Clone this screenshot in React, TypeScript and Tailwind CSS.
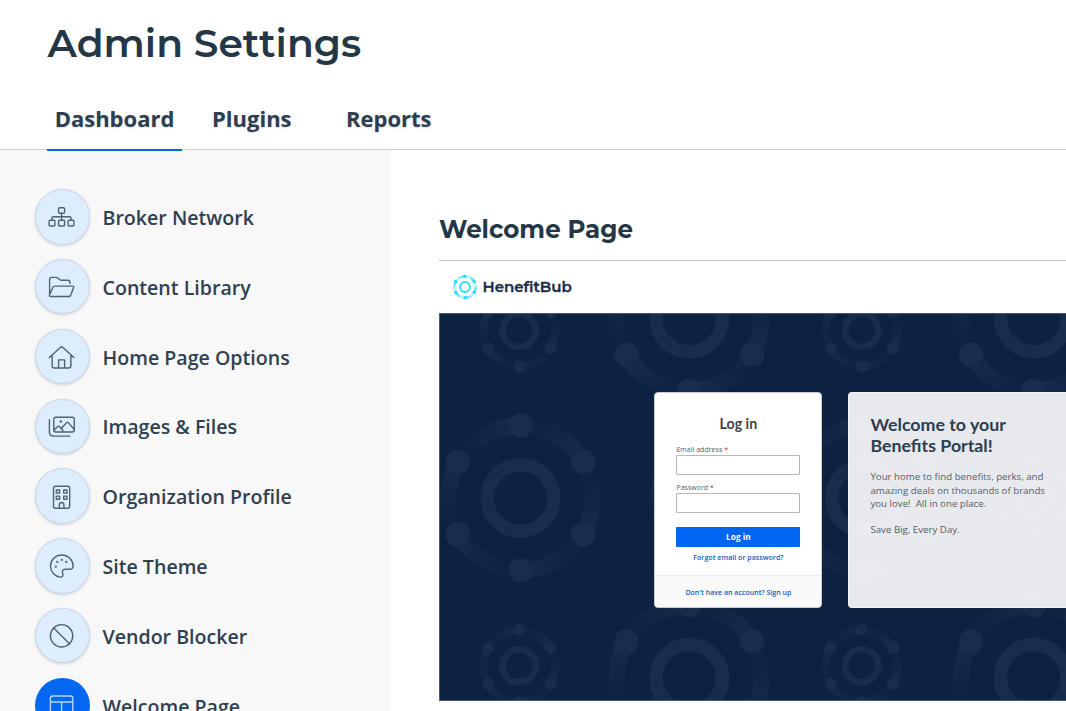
import type { ReactNode } from "react";

const ARC = "M0 -72.3A72.3 72.3 0 0 1 62.6 -36.15";
const ANGLES = [0, 60, 120, 180, 240, 300];

function Hub({ x, y, s = 1, grad, color }: { x: number; y: number; s?: number; grad: string; color: string }) {
  return (
    <g transform={`translate(${x} ${y}) scale(${s})`}>
      {ANGLES.map((a) => (
        <g key={a} transform={`rotate(${a})`}>
          <path d={ARC} fill="none" stroke={`url(#${grad})`} strokeWidth="16.5" />
        </g>
      ))}
      {ANGLES.map((a) => (
        <circle key={a} cy="-72.5" r="12.3" fill={color} transform={`rotate(${a})`} />
      ))}
      <circle r="33.3" fill="none" stroke={color} strokeWidth="13.5" />
    </g>
  );
}

function Pattern() {
  const big = [[250.3, 5.5], [594.7, 5.5], [81.5, 185], [426, 185], [250.3, 364.7], [594.7, 364.7]];
  const small = [[80.3, 17.3], [422.7, 17.3], [250.3, 185], [594.7, 185], [80.3, 352.8], [422.7, 352.8]];
  return (
    <svg className="absolute -top-px -left-px" width="627" height="388" viewBox="0 0 627 388">
      <defs>
        <linearGradient id="arc" gradientUnits="userSpaceOnUse" x1="8" y1="-76" x2="60" y2="-46">
          <stop offset="0" stopColor="#182c4b" stopOpacity="0.05" />
          <stop offset="1" stopColor="#182c4b" stopOpacity="0.7" />
        </linearGradient>
      </defs>
      {big.map(([x, y]) => <Hub key={`${x}-${y}`} x={x} y={y} grad="arc" color="#182c4b" />)}
      {small.map(([x, y]) => <Hub key={`${x}-${y}`} x={x} y={y} s={0.497} grad="arc" color="#182c4b" />)}
    </svg>
  );
}

function Logo() {
  return (
    <svg width="26" height="26" viewBox="-13 -13 26 26">
      <defs>
        <linearGradient id="logoArc" gradientUnits="userSpaceOnUse" x1="8" y1="-76" x2="60" y2="-46">
          <stop offset="0" stopColor="#2fdcff" stopOpacity="0.1" />
          <stop offset="1" stopColor="#2fdcff" stopOpacity="0.9" />
        </linearGradient>
      </defs>
      <Hub x={0} y={0} s={0.147} grad="logoArc" color="#2fdcff" />
    </svg>
  );
}

const icons: Record<string, ReactNode> = {
  network: (
    <>
      <rect x="10.6" y="4.7" width="6" height="5.6" rx="1" />
      <rect x="1.1" y="17.2" width="5.8" height="5.8" rx="1" />
      <rect x="10.6" y="17.2" width="6" height="5.8" rx="1" />
      <rect x="20.1" y="17.2" width="5.8" height="5.8" rx="1" />
      <path d="M13.6 10.3v6.9M4 17.2v-2.2q0-1.3 1.3-1.3h16.4q1.3 0 1.3 1.3v2.2" />
    </>
  ),
  folder: (
    <path d="M1.6 22V6.6Q1.6 4.4 3.8 4.4h4.5q.9 0 1.6.7l1.9 1.7q.6.5 1.5.5h6.4q2.3 0 2.3 2.3v.8M1.4 22.3L4.9 14.2q.5-1.1 1.7-1.1h18q1.7 0 1 1.5l-3 7.8q-.5 1.1-1.7 1.1H2.7q-1.2 0-1.2-1.1" />
  ),
  home: (
    <path d="M1.3 14.6L12.6 4.2q1-1 2 0L25.9 14.6M4.1 12.4v10.3q0 2.3 2.3 2.3h14.2q2.3 0 2.3-2.3V12.4M10.6 25v-8.1h6V25" />
  ),
  images: (
    <>
      <rect x="5.8" y="4.3" width="20.5" height="14.7" rx="2" />
      <path d="M1.4 6.8v12.3q0 4 4 4H22M6 17.3l3.6-3.7q.9-.8 1.8 0l3.2 3.1q.7.9-.2 2.1M13 15.7l5.7-6.1q.8-.8 1.6 0l5.7 6.7" />
      <circle cx="12.8" cy="8.5" r=".6" />
    </>
  ),
  building: (
    <>
      <rect x="5.5" y="3.2" width="16.2" height="22" rx="2" />
      <rect x="8.3" y="7" width="3.3" height="3.1" />
      <rect x="15.7" y="7" width="3.3" height="3.1" />
      <rect x="8.3" y="13.1" width="3.3" height="3.1" />
      <rect x="15.7" y="13.1" width="3.3" height="3.1" />
      <path d="M11.3 25v-3.2q0-2.3 2.3-2.3t2.3 2.3V25" />
    </>
  ),
  palette: (
    <>
      <path d="M25.1 14.2C25.1 8 20.1 3 13.8 3 7.5 3 2.5 8 2.5 14.2c0 5.7 4.2 10.3 9.6 10.9 2.4.2 3.5-1.6 2.6-3.6-1.1-2.6.4-4.2 2.7-4.2h4.2c2.2 0 3.5-1 3.5-3.1Z" />
      <circle cx="7.8" cy="14.7" r=".45" />
      <circle cx="9.3" cy="10" r=".45" />
      <circle cx="13.8" cy="7.9" r=".45" />
      <circle cx="18.3" cy="10" r=".45" />
    </>
  ),
  ban: (
    <>
      <circle cx="13.6" cy="13.8" r="11.2" />
      <path d="M5.7 5.9L21.5 21.7" />
    </>
  ),
  layout: (
    <path d="M4.6 4h18q2.2 0 2.2 2.2v17H2.4v-17Q2.4 4 4.6 4ZM2.4 10h22.4M13.6 10v14" />
  ),
};

const items = [
  ["network", "Broker Network"],
  ["folder", "Content Library"],
  ["home", "Home Page Options"],
  ["images", "Images & Files"],
  ["building", "Organization Profile"],
  ["palette", "Site Theme"],
  ["ban", "Vendor Blocker"],
  ["layout", "Welcome Page"],
];

function Sidebar() {
  return (
    <nav className="flex w-[390px] shrink-0 flex-col gap-[13.8px] overflow-hidden bg-[#f8f8f8] pt-[38.9px] pl-[34.5px]">
      {items.map(([icon, label]) => {
        const active = icon === "layout";
        return (
          <a key={icon} className="flex h-[56px] shrink-0 items-center gap-[12.5px]">
            <span
              className={
                active
                  ? "flex size-[55.5px] items-center justify-center rounded-full bg-[#0467f1] text-[#b7d5ff]"
                  : "flex size-[55.5px] items-center justify-center rounded-full border border-[#c5d8eb] bg-[#ddedfe] text-[#526271] shadow-[0_1px_3px_rgba(0,0,0,0.16)]"
              }
            >
              <svg className="-ml-px" width="27" height="27" viewBox="0 0 27 27" fill="none" stroke="currentColor" strokeWidth="1.4" strokeLinecap="round" strokeLinejoin="round">
                {icons[icon]}
              </svg>
            </span>
            <span className="pt-[1.5px] text-[19.6px] font-semibold whitespace-nowrap text-[#2f4050]">{label}</span>
          </a>
        );
      })}
    </nav>
  );
}

function LoginCard() {
  return (
    <section className="flex h-[216px] w-[168px] shrink-0 flex-col overflow-hidden rounded-[4px] border border-[#c6ccd6] bg-white">
      <div className="flex h-[182px] flex-col px-[21px] pt-[21px]">
        <h3 className="text-center font-[Lato] text-[14.2px] leading-[20px] font-bold text-[#444]">Log in</h3>
        <label className="mt-[11px] text-[7px] leading-[9px] tracking-[0.03px] text-[#56616d]">Email address <span className="text-[#e02020]">*</span></label>
        <div className="mt-px h-[20px] rounded-[1px] border border-[#b5b8bb]" />
        <label className="mt-[8px] text-[7px] leading-[9px] tracking-[0.03px] text-[#56616d]">Password <span className="text-[#e02020]">*</span></label>
        <div className="mt-px h-[20px] rounded-[1px] border border-[#b5b8bb]" />
        <button className="mt-[14px] h-[20px] shrink-0 rounded-[1px] bg-[#0065f2] text-[8.3px] leading-[20px] font-bold text-white">Log in</button>
        <a className="mt-[5px] text-center text-[7.1px] leading-[11px] font-semibold whitespace-nowrap text-[#1460c8]">Forgot email or password?</a>
      </div>
      <div className="flex flex-1 items-center justify-center border-t border-[#eeeeee] bg-[#fafafa] pt-px text-[7.05px] font-semibold whitespace-nowrap text-[#1460c8]">
        Don't have an account? Sign up
      </div>
    </section>
  );
}

function WelcomeCard() {
  return (
    <section className="h-[216px] w-[260px] shrink-0 rounded-[4px] border border-white/50 bg-white/90 px-[21px] pt-[21px]">
      <h3 className="font-[Lato] text-[17.8px] leading-[21px] font-bold whitespace-nowrap text-[#2c3e50]">
        Welcome to your<br />Benefits Portal!
      </h3>
      <p className="mt-[14.4px] text-[9.7px] leading-[13.2px] whitespace-pre text-[#55606c]">
        {"Your home to find benefits, perks, and\namazing deals on thousands of brands\nyou love!  All in one place.\n\nSave Big, Every Day."}
      </p>
    </section>
  );
}

export default function App() {
  return (
    <div className="flex h-[711px] w-[1066px] flex-col overflow-hidden bg-white font-['Open_Sans',sans-serif]">
      <header className="flex h-[150px] shrink-0 flex-col justify-between border-b border-[#cfcfcf] pl-[47.5px]">
        <h1 className="mt-[18px] font-[Montserrat,Inter,sans-serif] text-[39.2px] leading-[50px] font-semibold whitespace-nowrap text-[#243746]">
          Admin Settings
        </h1>
        <nav className="relative z-10 -mb-[1.6px] flex h-[53px] text-[22px] font-bold text-[#2c3e50] [text-shadow:0_1px_2px_rgba(0,0,0,0.15)]">
          <a className="-ml-[0.5px] w-[135px] border-b-2 border-[#0467f1] pt-[4px] text-center leading-[32px]">Dashboard</a>
          <a className="w-[134px] pt-[4px] pl-[30px] leading-[32px]">Plugins</a>
          <a className="pt-[4px] pl-[30px] leading-[32px]">Reports</a>
        </nav>
      </header>
      <div className="flex h-[561px] shrink-0">
        <Sidebar />
        <main className="flex w-[676px] shrink-0 flex-col overflow-hidden pl-[49px]">
          <div className="flex h-[111px] shrink-0 items-end border-b border-[#c4c4c4]">
            <h2 className="mb-[13.6px] font-[Montserrat,Inter,sans-serif] text-[24.5px] leading-[34px] font-bold whitespace-nowrap text-[#243746]">
              Welcome Page
            </h2>
          </div>
          <div className="flex h-[52px] shrink-0 items-center gap-[4px] pl-[13px]">
            <Logo />
            <span className="pt-px pl-[0.5px] font-[Montserrat,Inter,sans-serif] text-[15px] font-semibold text-[#1a2b4c] [-webkit-text-stroke:0.3px_#1a2b4c]">HenefitBub</span>
          </div>
          <div className="relative h-[388px] w-[627px] shrink-0 overflow-hidden border-t border-b border-l border-[#4a5870] bg-[#0d2141]">
            <Pattern />
            <div className="relative flex gap-[26px] pt-[78px] pl-[214.4px]">
              <LoginCard />
              <WelcomeCard />
            </div>
          </div>
        </main>
      </div>
    </div>
  );
}
